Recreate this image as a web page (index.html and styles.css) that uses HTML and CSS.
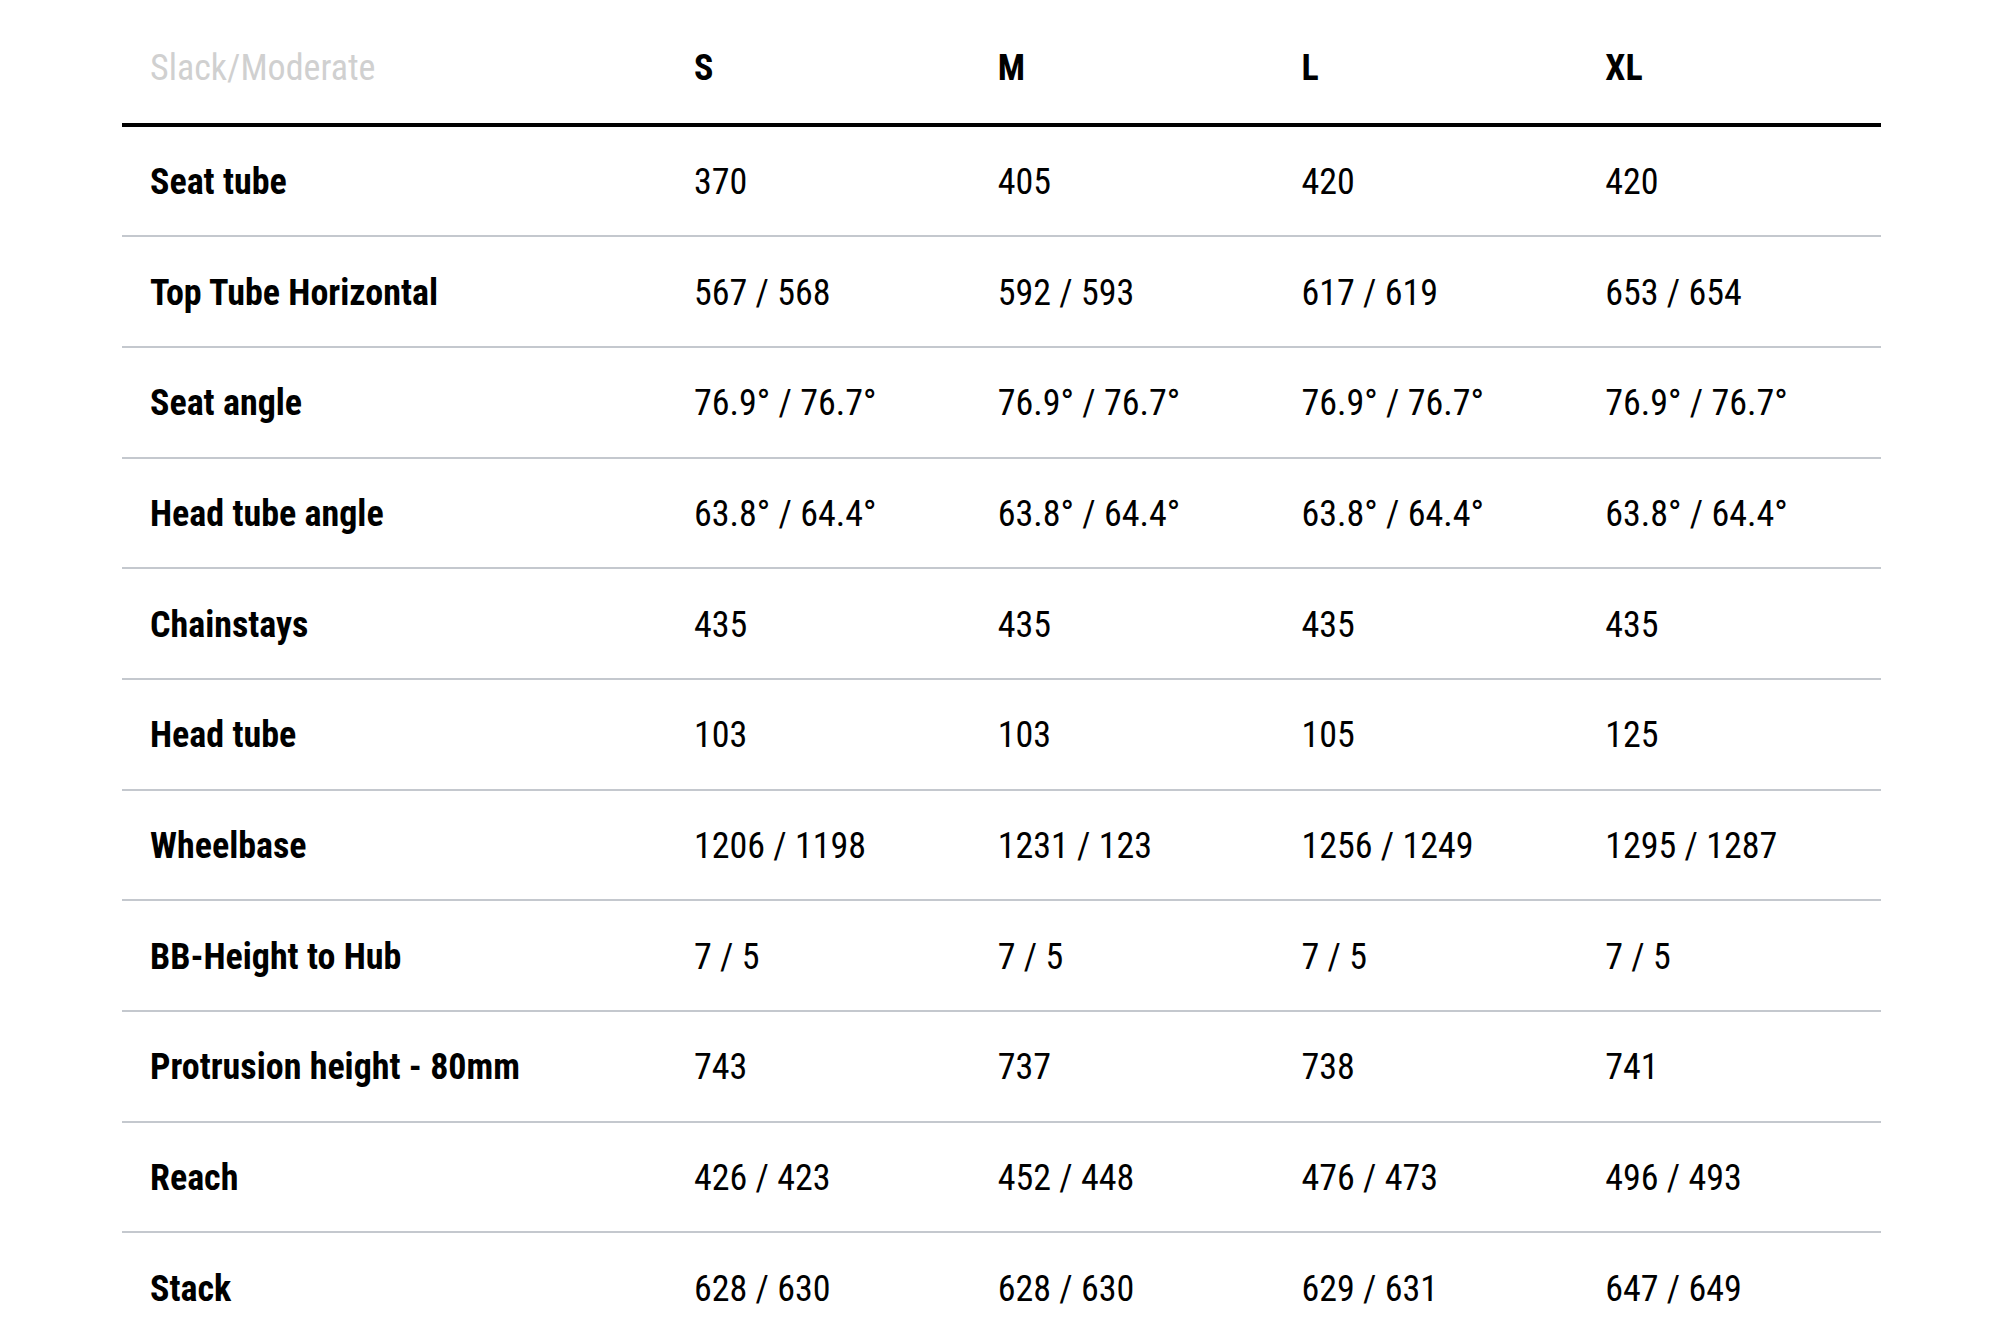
FILE: index.html
```html
<!DOCTYPE html>
<html lang="en">
<head>
<meta charset="utf-8">
<title>Geometry</title>
<link rel="stylesheet" href="styles.css">
</head>
<body>
<div class="geo">
  <div class="row head">
    <div class="cell muted">Slack/Moderate</div>
    <div class="cell size">S</div>
    <div class="cell size">M</div>
    <div class="cell size">L</div>
    <div class="cell size">XL</div>
  </div>
  <div class="row">
    <div class="cell label">Seat tube</div>
    <div class="cell">370</div><div class="cell">405</div><div class="cell">420</div><div class="cell">420</div>
  </div>
  <div class="row">
    <div class="cell label">Top Tube Horizontal</div>
    <div class="cell">567 / 568</div><div class="cell">592 / 593</div><div class="cell">617 / 619</div><div class="cell">653 / 654</div>
  </div>
  <div class="row">
    <div class="cell label">Seat angle</div>
    <div class="cell">76.9° / 76.7°</div><div class="cell">76.9° / 76.7°</div><div class="cell">76.9° / 76.7°</div><div class="cell">76.9° / 76.7°</div>
  </div>
  <div class="row">
    <div class="cell label">Head tube angle</div>
    <div class="cell">63.8° / 64.4°</div><div class="cell">63.8° / 64.4°</div><div class="cell">63.8° / 64.4°</div><div class="cell">63.8° / 64.4°</div>
  </div>
  <div class="row">
    <div class="cell label">Chainstays</div>
    <div class="cell">435</div><div class="cell">435</div><div class="cell">435</div><div class="cell">435</div>
  </div>
  <div class="row">
    <div class="cell label">Head tube</div>
    <div class="cell">103</div><div class="cell">103</div><div class="cell">105</div><div class="cell">125</div>
  </div>
  <div class="row">
    <div class="cell label">Wheelbase</div>
    <div class="cell">1206 / 1198</div><div class="cell">1231 / 123</div><div class="cell">1256 / 1249</div><div class="cell">1295 / 1287</div>
  </div>
  <div class="row">
    <div class="cell label">BB-Height to Hub</div>
    <div class="cell">7 / 5</div><div class="cell">7 / 5</div><div class="cell">7 / 5</div><div class="cell">7 / 5</div>
  </div>
  <div class="row">
    <div class="cell label">Protrusion height - 80mm</div>
    <div class="cell">743</div><div class="cell">737</div><div class="cell">738</div><div class="cell">741</div>
  </div>
  <div class="row">
    <div class="cell label">Reach</div>
    <div class="cell">426 / 423</div><div class="cell">452 / 448</div><div class="cell">476 / 473</div><div class="cell">496 / 493</div>
  </div>
  <div class="row">
    <div class="cell label">Stack</div>
    <div class="cell">628 / 630</div><div class="cell">628 / 630</div><div class="cell">629 / 631</div><div class="cell">647 / 649</div>
  </div>
</div>
</body>
</html>
```
FILE: styles.css
```css
html, body {
  margin: 0;
  padding: 0;
  background: #ffffff;
}
body {
  font-family: "Roboto Condensed", "Roboto", sans-serif;
  font-stretch: condensed;
  font-size: 36px;
  color: #000000;
  overflow: hidden;
}
.geo {
  margin-left: 122px;
  width: 1759px;
}
.row {
  display: grid;
  grid-template-columns: 544px repeat(4, 1fr);
  align-items: center;
  box-sizing: border-box;
  height: 110.7px;
  padding-top: 3px;
  border-bottom: 2px solid #c4c8ce;
}
.row.head {
  height: 126.6px;
  padding-top: 14px;
  border-bottom: 4.6px solid #000000;
}
.cell {
  padding-left: 28px;
  line-height: 1.2;
  white-space: nowrap;
  font-weight: 400;
}
.label,
.size {
  font-weight: 700;
}
.muted {
  color: #d0d0d0;
  font-weight: 400;
}
```
